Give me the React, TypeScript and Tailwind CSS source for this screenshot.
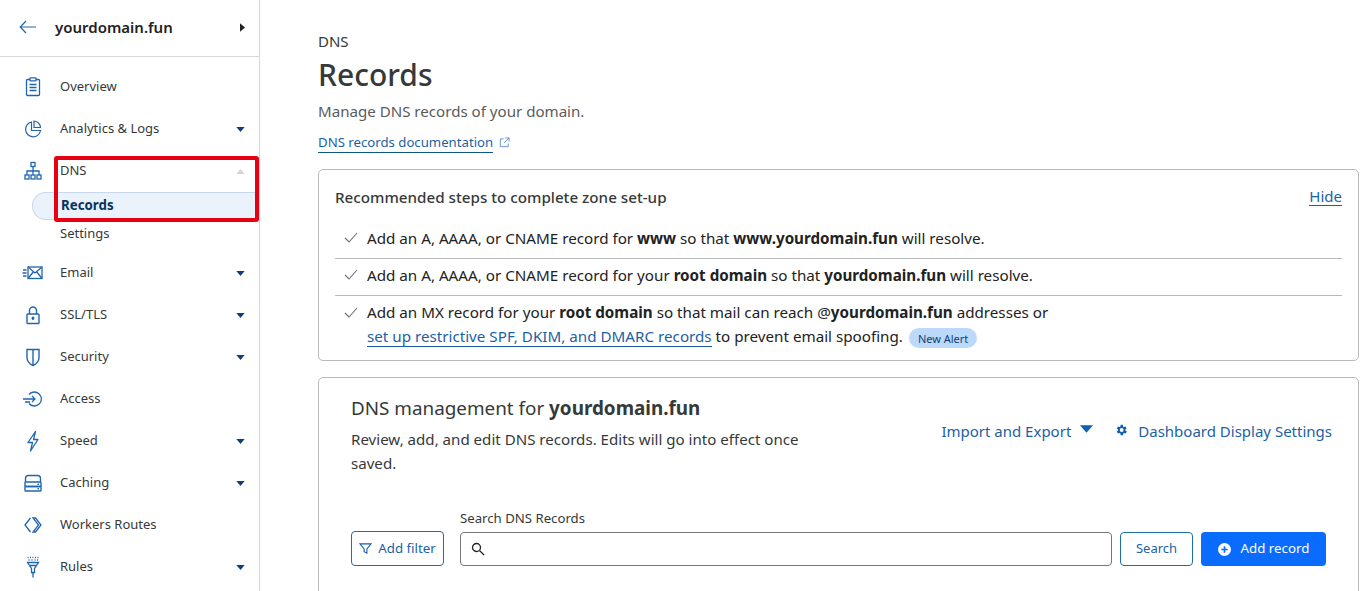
import React from "react";

const iconClass = "w-[22px] h-[22px] text-[#2066ae]";

const Overview = () => (
  <svg viewBox="0 0 22 22" className={iconClass} fill="none" stroke="currentColor" strokeWidth="1.3">
    <rect x="4.5" y="3.5" width="13" height="16" rx="1" />
    <rect x="8" y="1.8" width="6" height="3" rx="0.6" fill="white" />
    <path d="M7.5 8.5h7M7.5 11.5h7M7.5 14.5h7" />
  </svg>
);
const Analytics = () => (
  <svg viewBox="0 0 22 22" className={iconClass} fill="none" stroke="currentColor" strokeWidth="1.2">
    <path d="M9.5 4A7.5 7.5 0 1 0 18.5 12.5H9.5Z" />
    <path d="M12 3A7 7 0 0 1 18.5 9.500H12Z" />
  </svg>
);
const Dns = () => (
  <svg viewBox="0 0 22 22" className={iconClass} fill="none" stroke="currentColor" strokeWidth="1.3">
    <rect x="9" y="2.5" width="4" height="4" />
    <rect x="3" y="15" width="4" height="4" />
    <rect x="9" y="15" width="4" height="4" />
    <rect x="15" y="15" width="4" height="4" />
    <path d="M11 6.5V15M5 15v-4h12v4" />
  </svg>
);
const Email = () => (
  <svg viewBox="0 0 22 22" className={iconClass} fill="none" stroke="currentColor" strokeWidth="1.3">
    <rect x="6" y="5" width="14" height="11.5" />
    <path d="M6 5l7 6 7-6M6 16.5l5.2-6.5M20 16.5l-5.2-6.5M1 8h3.5M0.5 11h4M1 14h3.5" />
  </svg>
);
const Lock = () => (
  <svg viewBox="0 0 22 22" className={iconClass} fill="none" stroke="currentColor" strokeWidth="1.4">
    <rect x="5" y="10" width="12" height="9.500" rx="0.8" />
    <path d="M7.500 10V6.500a3.500 3.500 0 0 1 7 0V10" />
    <circle cx="11" cy="14" r="0.8" fill="currentColor" />
    <path d="M11 14v2" />
  </svg>
);
const Shield = () => (
  <svg viewBox="0 0 22 22" className={iconClass} fill="none" stroke="currentColor" strokeWidth="1.4">
    <path d="M5 3.500h12v8c0 4-2.800 6.500-6 8-3.200-1.500-6-4-6-8Z" />
    <path d="M11 3.500v16" />
  </svg>
);
const Access = () => (
  <svg viewBox="0 0 22 22" className={iconClass} fill="none" stroke="currentColor" strokeWidth="1.3">
    <path d="M7 6.500a7 7 0 1 1 0 9" />
    <path d="M1 11h12M10 8l3 3-3 3M3 14h5" />
  </svg>
);
const Speed = () => (
  <svg viewBox="0 0 22 22" className={iconClass} fill="none" stroke="currentColor" strokeWidth="1.3" strokeLinejoin="round">
    <path d="M13.500 1.500 6 12.500h4.500L8.500 21l7.500-11.500h-4.500Z" />
  </svg>
);
const Caching = () => (
  <svg viewBox="0 0 22 22" className={iconClass} fill="none" stroke="currentColor" strokeWidth="1.4">
    <path d="M3.500 10V6.500A3 3 0 0 1 6.500 3.500h9a3 3 0 0 1 3 3V10" />
    <rect x="3" y="10" width="16" height="4.500" rx="0.8" />
    <rect x="3" y="14.500" width="16" height="4.500" rx="0.8" />
    <path d="M15.500 12.200h1.500M15.500 16.700h1.500" />
  </svg>
);
const Workers = () => (
  <svg viewBox="0 0 22 22" className={iconClass} fill="none" stroke="currentColor" strokeWidth="1.3">
    <path d="M8.500 4 3 11l5.500 7" />
    <path d="M11 4h2.500L19 11l-5.500 7H11l5.500-7Z" />
  </svg>
);
const Rules = () => (
  <svg viewBox="0 0 22 22" className={iconClass} fill="none" stroke="currentColor" strokeWidth="1.3">
    <path d="M5.500 6.500h11l-4 6v4h-3v-4Z" />
    <path d="M7.500 9.500h7M11 16.500v5" />
    <path d="M5.500 1.500h1M8 1.500h1M10.500 1.500h1M13 1.500h1M15.500 1.500h1M6.500 4h1M9.500 4h1M12.500 4h1M15 4h1" />
  </svg>
);

const Caret = ({ up }: { up?: boolean }) => (
  <svg viewBox="0 0 10 6" className="w-[9px] h-[5px]">
    {up ? <path d="M5 0l5 6H0Z" fill="#d3d5d8" /> : <path d="M0 0h10L5 6Z" fill="#0f3f78" />}
  </svg>
);

const NavItem = ({ icon, label, caret, open }: { icon: React.ReactNode; label: string; caret?: boolean; open?: boolean }) => (
  <div className="flex items-center h-[42px] pl-[22px] pr-[14px]">
    <div className="w-[38px] flex">{icon}</div>
    <span className="flex-1 text-[13px] text-[#36393a]">{label}</span>
    {caret && <Caret up={open} />}
  </div>
);

const Sidebar = () => (
  <aside className="w-[260px] shrink-0 h-full border-r border-[#d5d7d8] overflow-hidden">
    <div className="flex items-center h-[57px] pb-[2px] border-b border-[#d5d7d8] pl-[19px] pr-[14px]">
      <svg viewBox="0 0 18 14" className="w-[18px] h-[14px] text-[#2066ae]" fill="none" stroke="currentColor" strokeWidth="1.2">
        <path d="M17 7H1.500M7 1 1.200 7 7 13" />
      </svg>
      <span className="flex-1 ml-[18px] text-[15px] font-semibold text-[#222]">yourdomain.fun</span>
      <svg viewBox="0 0 6 10" className="w-[5px] h-[9px]"><path d="M0 0l6 5-6 5Z" fill="#222" /></svg>
    </div>
    <nav className="pt-[9px]">
      <NavItem icon={<Overview />} label="Overview" />
      <NavItem icon={<Analytics />} label="Analytics & Logs" caret />
      <NavItem icon={<Dns />} label="DNS" caret open />
      <div className="flex items-center h-[28px] ml-[32px] pl-[28px] rounded-l-full bg-[#eaf2fb] border border-r-0 border-[#c8d8ea]">
        <span className="text-[13.3px] font-bold text-[#07335f]">Records</span>
      </div>
      <div className="flex items-center h-[28px] pl-[60px] text-[13px] text-[#36393a]">Settings</div>
      <div className="h-[4px]" />
      <NavItem icon={<Email />} label="Email" caret />
      <NavItem icon={<Lock />} label="SSL/TLS" caret />
      <NavItem icon={<Shield />} label="Security" caret />
      <NavItem icon={<Access />} label="Access" />
      <NavItem icon={<Speed />} label="Speed" caret />
      <NavItem icon={<Caching />} label="Caching" caret />
      <NavItem icon={<Workers />} label="Workers Routes" />
      <NavItem icon={<Rules />} label="Rules" caret />
    </nav>
  </aside>
);

const Check = () => (
  <svg viewBox="0 0 14 12" className="w-[14px] h-[12px] mt-[7px] shrink-0 text-[#6b6f72]" fill="none" stroke="currentColor" strokeWidth="1.1">
    <path d="M1 6l4 4 8-9" />
  </svg>
);

const Steps = () => (
  <section className="border border-[#b9babb] rounded-[5px] h-[192px] px-[16px] text-[#222]">
    <div className="flex items-center justify-between h-[54px]">
      <h3 className="text-[15.2px] font-medium text-[#36393a]">Recommended steps to complete zone set-up</h3>
      <a className="text-[15px] text-[#1d5fa5] border-b border-[#1d5fa5] leading-[18px] -mt-[2px]">Hide</a>
    </div>
    <div className="flex gap-[9px] pl-[9px] h-[35px] pt-[1px] text-[15.2px] leading-[26px] border-b border-[#b9babb]">
      <Check />
      <p>Add an A, AAAA, or CNAME record for <b>www</b> so that <b>www.yourdomain.fun</b> will resolve.</p>
    </div>
    <div className="flex gap-[9px] pl-[9px] h-[37px] pt-[3px] text-[15.2px] leading-[26px] border-b border-[#b9babb]">
      <Check />
      <p>Add an A, AAAA, or CNAME record for your <b>root domain</b> so that <b>yourdomain.fun</b> will resolve.</p>
    </div>
    <div className="flex gap-[9px] pl-[9px] pt-[4px] text-[15.2px] leading-[24px]">
      <Check />
      <p>
        Add an MX record for your <b>root domain</b> so that mail can reach @<b>yourdomain.fun</b> addresses or
        <br />
        <a className="text-[#1d5fa5] border-b border-[#1d5fa5]">set up restrictive SPF, DKIM, and DMARC records</a> to prevent email spoofing.
        <span className="ml-[6px] inline-block align-middle h-[20px] leading-[21px] px-[9px] rounded-full bg-[#bcd9fb] text-[11px] text-[#123f72]">New Alert</span>
      </p>
    </div>
  </section>
);

const Management = () => (
  <section className="mt-[16px] border border-[#b9babb] rounded-[5px] h-[240px] pl-[32px] pr-[32px] pt-[17px]">
    <div className="flex justify-between -mr-[6px]">
      <div className="w-[470px]">
        <h2 className="text-[18.85px] leading-[26px] text-[#36393a]">
          DNS management for <span className="font-bold">yourdomain.fun</span>
        </h2>
        <p className="mt-[6px] text-[15.1px] leading-[24px] text-[#36393a]">
          Review, add, and edit DNS records. Edits will go into effect once saved.
        </p>
      </div>
      <div className="flex items-center h-[26px] mt-[23px] text-[15px] text-[#1d5fa5]">
        <span>Import and Export</span>
        <svg viewBox="0 0 14 8" className="w-[13px] h-[8px] ml-[9px] -mt-[4px]"><path d="M0 0h14L7 8Z" fill="#0f5fb4" /></svg>
        <svg viewBox="0 0 24 24" className="w-[14px] h-[14px] ml-[21px] mr-[10px] -mt-[2px]" fill="#0f5fb4">
          <path d="M19.400 13a7.500 7.500 0 0 0 0-2l2.100-1.600-2-3.500-2.500 1a7.500 7.500 0 0 0-1.700-1L15.400 3.200h-4l-.4 2.700a7.500 7.500 0 0 0-1.700 1l-2.500-1-2 3.500L6.900 11a7.500 7.500 0 0 0 0 2l-2.100 1.600 2 3.500 2.500-1a7.500 7.500 0 0 0 1.700 1l.4 2.700h4l.4-2.700a7.500 7.500 0 0 0 1.700-1l2.500 1 2-3.500ZM13.200 15.300a3.300 3.300 0 1 1 0-6.600 3.300 3.300 0 0 1 0 6.600Z" />
        </svg>
        <span>Dashboard Display Settings</span>
      </div>
    </div>
    <div className="flex items-end mt-[34px]">
      <button className="flex items-center justify-center w-[93px] h-[35px] border border-[#1d6fa5] rounded-[4px] text-[13.3px] text-[#1d5fa5]">
        <svg viewBox="0 0 14 14" className="w-[13px] h-[13px] mr-[6px]" fill="none" stroke="currentColor" strokeWidth="1.200">
          <path d="M1 2h12L8.500 7.500V12l-3-1.500v-3Z" />
        </svg>
        Add filter
      </button>
      <div className="ml-[16px] flex-1">
        <label className="block text-[13.200px] leading-[18px] mb-[5px] text-[#36393a]">Search DNS Records</label>
        <div className="flex items-center h-[34px] border border-[#747678] rounded-[4px] pl-[10px]">
          <svg viewBox="0 0 14 14" className="w-[14px] h-[14px] text-[#222]" fill="none" stroke="currentColor" strokeWidth="1.300">
            <circle cx="5.500" cy="5.500" r="4" />
            <path d="M8.500 8.500l4.500 4.500" />
          </svg>
        </div>
      </div>
      <button className="ml-[8px] w-[73px] h-[34px] border border-[#1d6fa5] rounded-[4px] text-[13px] text-[#1d5fa5]">Search</button>
      <button className="ml-[8px] flex items-center justify-center w-[125px] h-[34px] rounded-[4px] bg-[#0a6cff] text-[13.3px] text-white">
        <svg viewBox="0 0 14 14" className="w-[13px] h-[13px] mr-[10px]">
          <circle cx="7" cy="7" r="7" fill="white" />
          <path d="M7 3.500v7M3.500 7h7" stroke="#0a6cff" strokeWidth="1.800" />
        </svg>
        Add record
      </button>
    </div>
  </section>
);

export default function App() {
  return (
    <div className="relative flex w-[1366px] h-[591px] overflow-hidden bg-white font-['Noto_Sans',sans-serif]">
      <Sidebar />
      <main className="flex-1 pl-[58px] pr-[7px] pt-[31px]">
        <div className="text-[15px] leading-[20px] text-[#36393a]">DNS</div>
        <h1 className="mt-[3px] text-[30px] leading-[42px] font-medium text-[#36393a]">Records</h1>
        <p className="mt-[4px] text-[15.1px] leading-[22px] text-[#595b5c]">Manage DNS records of your domain.</p>
        <div className="mt-[10px] flex items-center h-[22px]">
          <a className="text-[13.2px] leading-[19px] text-[#1d5fa5] border-b border-[#0f5a80]">DNS records documentation</a>
          <svg viewBox="0 0 12 12" className="w-[11px] h-[11px] ml-[6px] -mt-[2px] text-[#5a8fc8]" fill="none" stroke="currentColor" strokeWidth="1">
            <path d="M5 2H1.500v8.500H10V7M7 1h4v4M11 1 5.500 6.500" />
          </svg>
        </div>
        <div className="mt-[15px]">
          <Steps />
          <Management />
        </div>
      </main>
      <div className="absolute left-[54px] top-[156px] w-[205px] h-[66px] border-[4px] border-[#e60012] rounded-[3px]" />
    </div>
  );
}
